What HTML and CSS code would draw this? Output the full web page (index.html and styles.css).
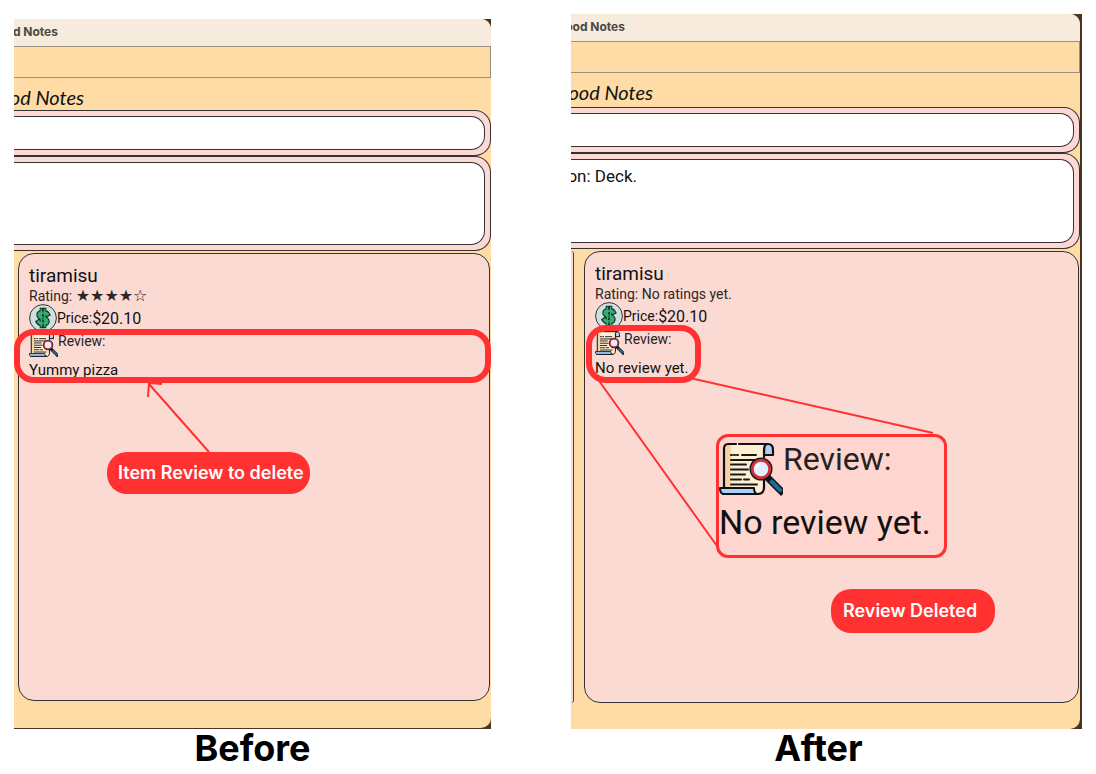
FILE: index.html
```html
<!DOCTYPE html>
<html lang="en">
<head>
<meta charset="utf-8">
<title>Food Notes: delete item review</title>
<link rel="stylesheet" href="styles.css">
</head>
<body>
<svg class="defs" aria-hidden="true">
  <symbol id="dollar" viewBox="0 0 28 28">
    <circle cx="14" cy="14" r="13.4" fill="#cfe0de" stroke="#303735" stroke-width="1"/>
    <g fill="none" stroke="#17281f" stroke-width="5.4" stroke-linejoin="round" stroke-linecap="square">
      <path d="M18.2 10.2C17 8 10 7.600 10 11c0 3.600 8 2.400 8 6.200 0 3.400-6.500 3.300-8.300.9"/>
      <path d="M12.400 5.500v17M15.600 5.500v17" stroke-width="3.400"/>
    </g>
    <g fill="none" stroke="#35ae74" stroke-width="3.200" stroke-linejoin="round" stroke-linecap="square">
      <path d="M12.400 5.500v17M15.600 5.500v17" stroke-width="1.600"/>
      <path d="M18.200 10.200C17 8 10 7.600 10 11c0 3.600 8 2.400 8 6.200 0 3.400-6.500 3.300-8.300.9"/>
    </g>
    <path d="M14 5.500v3M14 12.500v3M14 19.500v3" stroke="#17281f" stroke-width=".9"/>
  </symbol>
  <symbol id="scroll" viewBox="0 0 64 54">
    <path d="M45 2h4c4 0 5 3 5 6v5h-9z" fill="#a9d0fb" stroke="#111" stroke-width="2.200" stroke-linejoin="round"/>
    <path d="M5 46V7c0-3 1-5 4-5h40c-3 0-4 3-4 6v37c0 4-2 7-6 7H10z" fill="#ffefd2"/>
    <path d="M6 46V7c0-2 1-4 3-4h3v43z" fill="#f6d3a5"/>
    <path d="M5 45V7c0-3 1-5 4-5h8M20 2h29c-3 0-4 3-4 6v7M45 38v7c0 4-2 7-6 7H4" fill="none" stroke="#111" stroke-width="2.200" stroke-linecap="round"/>
    <path d="M1 46h34c0 3 1 6 4 6H5c-3 0-4-2-4-6z" fill="#a9d0fb" stroke="#111" stroke-width="2" stroke-linejoin="round"/>
    <path d="M12 13h1M15 13h1M18 13h1M23 13h14M12 18h25M12 22.500h15M12 27.500h17M12 32.500h14M12 37.500h10M25 37.500h5M12 42.500h26" stroke="#181818" stroke-width="2" stroke-linecap="round"/>
    <path d="M50 37l12 12" stroke="#101820" stroke-width="7" stroke-linecap="square"/>
    <path d="M53 40l8 8" stroke="#246b92" stroke-width="4" stroke-linecap="square"/>
    <circle cx="42" cy="27" r="11.500" fill="#111"/>
    <circle cx="42" cy="27" r="8.800" fill="#e2effd" stroke="#cf3141" stroke-width="3"/>
    <path d="M37.500 26c.5-2 2-3.500 4-4" stroke="#fff" stroke-width="1.800" fill="none"/>
  </symbol>
</svg>
<main class="comparison">
  <figure class="shot before">
    <div class="desktop">
      <section class="window">
        <header class="titlebar"><span class="cut">Food Notes</span></header>
        <div class="menubar"></div>
        <div class="brand"><span class="cut">Food Notes</span></div>
        <div class="panel search"><input class="field" type="text" aria-label="Command"></div>
        <div class="panel result"><output class="field"></output></div>
        <div class="lists">
          <article class="card">
            <h2>tiramisu</h2>
            <p class="rating">Rating: <span class="stars">★★★★☆</span></p>
            <p class="price"><svg class="coin"><use href="#dollar"/></svg>Price:<b>$20.10</b></p>
            <p class="review"><svg class="paper"><use href="#scroll"/></svg>Review:</p>
            <p class="note">Yummy pizza</p>
          </article>
        </div>
      </section>
    </div>
    <div class="highlight"></div>
    <svg class="pointer" viewBox="0 0 80 80" aria-hidden="true"><path d="M8 17 9 3l13 1M9 4l60 68"/></svg>
    <div class="tag">Item Review to delete</div>
    <figcaption>Before</figcaption>
  </figure>

  <figure class="shot after">
    <div class="desktop">
      <section class="window">
        <header class="titlebar"><span class="cut">Food Notes</span></header>
        <div class="menubar"></div>
        <div class="brand"><span class="cut">Food Notes</span></div>
        <div class="panel search"><input class="field" type="text" aria-label="Command"></div>
        <div class="panel result"><output class="field"><span class="cut">Description: Deck.</span></output></div>
        <div class="lists">
          <div class="neighbour"></div>
          <article class="card">
            <h2>tiramisu</h2>
            <p class="rating">Rating: No ratings yet.</p>
            <p class="price"><svg class="coin"><use href="#dollar"/></svg>Price:<b>$20.10</b></p>
            <p class="review"><svg class="paper"><use href="#scroll"/></svg>Review:</p>
            <p class="note">No review yet.</p>
          </article>
        </div>
      </section>
    </div>
    <div class="highlight"></div>
    <svg class="pointer" viewBox="0 0 350 180" aria-hidden="true"><path d="M6 8l120 168M99 8l243 55"/></svg>
    <div class="magnified">
      <p class="review"><svg class="paper"><use href="#scroll"/></svg>Review:</p>
      <p class="note">No review yet.</p>
    </div>
    <div class="tag">Review Deleted</div>
    <figcaption>After</figcaption>
  </figure>
</main>
</body>
</html>
```
FILE: styles.css
```css
* { box-sizing: border-box; }

body {
  margin: 0;
  background: #fff;
  color: #111;
  font-family: Inter, "Liberation Sans", sans-serif;
}

h2, p, figure { margin: 0; }

.defs { position: absolute; width: 0; height: 0; }

.comparison {
  display: grid;
  grid-template-columns: 477fr 511fr;
  gap: 80px;
  padding: 14px 14px 0;
}

.shot { position: relative; }
.before { margin-top: 5px; }

.desktop { background: #4b3520; }
.before .desktop { padding-bottom: 1px; }
.after .desktop { padding-right: 2px; }

.window {
  background: #ffdca5;
  border-radius: 0 10px 10px 0;
  overflow: hidden;
}

.cut {
  display: flex;
  justify-content: flex-end;
  overflow: hidden;
  white-space: nowrap;
}

.titlebar {
  height: 27px;
  background: #f6ebdc;
  color: #494843;
  font-size: 12px;
  font-weight: 700;
  line-height: 26px;
}
.before .titlebar .cut { width: 44px; }
.after .titlebar .cut { width: 54px; }

.menubar {
  height: 32px;
  border: 1px solid #99907e;
  border-left: 0;
}

.brand {
  height: 32px;
  font: italic 20px/38px Lato, sans-serif;
}
.after .brand { height: 34px; }
.before .brand .cut { width: 70px; }
.after .brand .cut { width: 82px; }

.panel {
  display: flex;
  padding: 5px 5px 5px 0;
  background: #fdd9d5;
  border: 1px solid #333;
  border-left: 0;
  border-radius: 0 16px 16px 0;
}
.search { height: 46px; }
.result { height: 95px; }
.after .result { height: 96px; }

.field {
  flex: 1;
  min-width: 0;
  padding: 0;
  background: #fff;
  border: 1px solid #333;
  border-left: 0;
  border-radius: 0 14px 14px 0;
  font-family: Roboto, sans-serif;
  font-size: 17px;
  line-height: 32px;
}
.field .cut { width: 66px; }

.lists {
  display: flex;
  gap: 10px;
  margin-top: 2px;
  padding: 0 1px 27px 4px;
}
.after .lists { padding: 0 1px 26px 0; }

.neighbour {
  width: 3px;
  background: #fcdad4;
  border-right: 1px solid #444;
  border-radius: 0 3px 3px 0;
}

.card {
  flex: 1;
  min-height: 448px;
  padding: 10px;
  background: #fcdad4;
  border: 1px solid #333;
  border-radius: 16px;
  font-family: Roboto, sans-serif;
  font-size: 14px;
}
.after .card { min-height: 452px; }
.card h2 { font-size: 19px; font-weight: 400; line-height: 24px; }
.rating { height: 16px; font-size: 14px; line-height: 16px; color: #2b2726; }
.stars { font-family: "DejaVu Sans", sans-serif; font-size: 16px; line-height: 16px; }
.price { display: flex; align-items: center; height: 28px; }
.price b { font-weight: 400; font-size: 16px; }
.coin { width: 28px; height: 28px; }
.review { display: flex; height: 28px; line-height: 18px; color: #262221; font-size: 14px; }
.paper { width: 29px; height: 26px; }
.card .note { font-size: 15px; line-height: 20px; }

/* Annotations drawn over the windows */
.highlight {
  position: absolute;
  top: 310px;
  left: 0;
  right: 0;
  height: 54px;
  border: 6px solid #ff3131;
  border-radius: 20px;
}
.after .highlight { top: 311px; left: 15px; right: auto; width: 115px; height: 58px; }

.pointer {
  position: absolute;
  fill: none;
  stroke: #ff3131;
  stroke-width: 2;
}
.before .pointer { left: 126px; top: 361px; width: 80px; height: 80px; }
.after .pointer { left: 20px; top: 356px; width: 350px; height: 180px; }

.tag {
  position: absolute;
  left: 93px;
  top: 433px;
  padding: 0 6px 0 11px;
  background: #ff3131;
  border-radius: 20px;
  color: #fff;
  font-size: 18px;
  font-weight: 600;
  line-height: 42px;
  white-space: nowrap;
}
.after .tag { left: 260px; top: 575px; padding: 0 18px 0 12px; line-height: 44px; }

.magnified {
  position: absolute;
  left: 145px;
  top: 420px;
  width: 231px;
  height: 124px;
  padding: 5px 0;
  background: #fed5cf;
  border: 3px solid #ff3131;
  border-radius: 12px;
  font-family: Roboto, sans-serif;
  white-space: nowrap;
}
.magnified .review { height: 60px; font-size: 32px; line-height: 34px; }
.magnified .paper { width: 64px; height: 54px; }
.magnified .note { font-size: 34px; line-height: 40px; }

figcaption {
  color: #000;
  font-size: 36px;
  font-weight: 700;
  line-height: 38px;
  text-align: center;
}
.after figcaption { padding-right: 16px; }
```
